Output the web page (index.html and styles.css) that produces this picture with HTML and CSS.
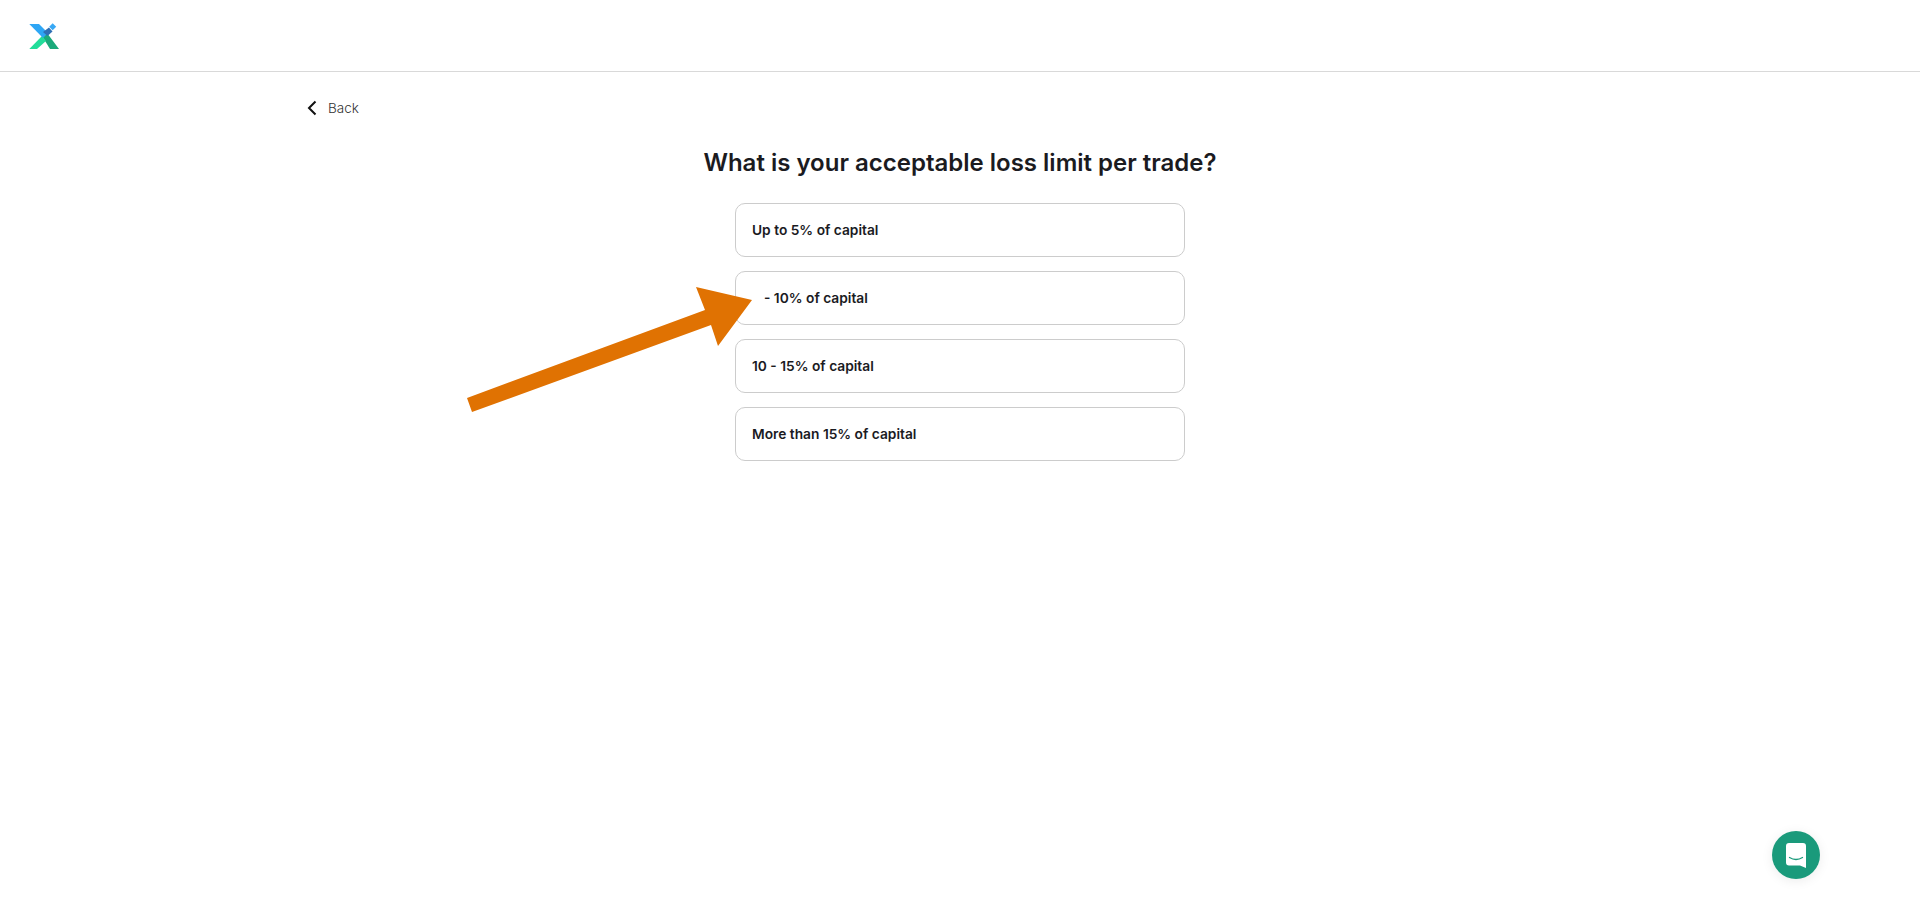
FILE: index.html
```html
<!DOCTYPE html>
<html lang="en">
<head>
  <meta charset="UTF-8">
  <meta name="viewport" content="width=device-width, initial-scale=1.0">
  <title>Risk profile</title>
  <link rel="stylesheet" href="styles.css">
</head>
<body>
  <header class="topbar">
    <svg class="logo" width="32" height="29" viewBox="0 0 32 29">
      <polygon points="14,15 19,12 31,28 22,28" fill="#1ba97a"/>
      <polygon points="1.300,28 9,28 18,20 14,15" fill="#22dd9a"/>
      <polygon points="1.300,3 11,3 20,12 15,17" fill="#2ea6f5"/>
      <polygon points="15,11 21,6.500 24.500,10.500 19.500,15" fill="#2f6fb5"/>
      <polygon points="21.200,5.700 24.700,2.200 28.200,5.700 24.700,9.200" fill="#38a8f5"/>
    </svg>
  </header>

  <main class="page">
    <a class="back" href="#">
      <svg width="12" height="16" viewBox="0 0 12 16">
        <path d="M9.500 1.500 L3 8 L9.500 14.500" fill="none" stroke="#111" stroke-width="2"/>
      </svg>
      <span>Back</span>
    </a>

    <h1 class="question">What is your acceptable loss limit per trade?</h1>

    <div class="options">
      <button class="option">Up to 5% of capital</button>
      <button class="option option-covered">- 10% of capital</button>
      <button class="option">10 - 15% of capital</button>
      <button class="option">More than 15% of capital</button>
    </div>
  </main>

  <!-- annotation arrow on top of the page -->
  <svg class="arrow" width="1920" height="919" viewBox="0 0 1920 919">
    <polygon points="467,398 705,310 696,287 752,300 718,346 711,325 472,412" fill="#e07202"/>
  </svg>

  <button class="chat">
    <svg width="22" height="27" viewBox="0 0 22 27">
      <path d="M4 1 H18 A3 3 0 0 1 21 4 V26 L15 23.500 H4 A3 3 0 0 1 1 20.500 V4 A3 3 0 0 1 4 1 Z" fill="#fff"/>
      <path d="M4.500 15.500 Q11 19.500 17.500 15.500" fill="none" stroke="#1a9a7b" stroke-width="1.300" stroke-linecap="round"/>
    </svg>
  </button>
</body>
</html>
```

FILE: styles.css
```css
body {
  margin: 0;
  height: 919px;
  overflow: hidden;
  background-color: #fff;
  color: #1b1b1f;
  font-family: Inter, "Noto Sans", sans-serif;
}
.topbar {
  display: flex;
  align-items: center;
  height: 71px;
  padding-left: 28px;
  border-bottom: 1px solid #d9d9d9;
}
.page {
  width: 1400px;
  margin: 0 auto;
  padding-top: 26px;
}
.back {
  display: inline-flex;
  align-items: center;
  gap: 10px;
  padding-left: 46px;
  height: 20px;
  color: #333;
  font-size: 13.500px;
  font-weight: 300;
  text-decoration: none;
}
.question {
  margin: 23px 0 0;
  font-size: 24px;
  font-weight: 600;
  line-height: 40px;
  text-align: center;
}
.options {
  display: flex;
  flex-direction: column;
  gap: 14px;
  width: 450px;
  margin: 20px auto 0;
}
.option {
  height: 54px;
  padding: 0 16px 1px;
  background-color: #fff;
  border: 1px solid #ccc;
  border-radius: 10px;
  color: #1b1b1f;
  font-family: inherit;
  font-size: 13.750px;
  font-weight: 600;
  text-align: left;
}
.option-covered {
  padding-left: 28px;
}
.arrow {
  position: absolute;
  top: 0;
  left: 0;
  pointer-events: none;
}
.chat {
  position: absolute;
  top: 831px;
  left: 1772px;
  display: flex;
  align-items: center;
  justify-content: center;
  width: 48px;
  height: 48px;
  padding: 0;
  border: none;
  border-radius: 50%;
  background-color: #1a9a7b;
  box-shadow: 0 2px 12px rgba(0, 0, 0, 0.08);
}
```
